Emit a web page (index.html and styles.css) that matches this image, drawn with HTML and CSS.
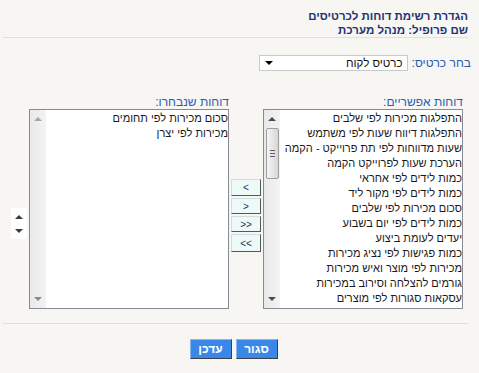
FILE: index.html
```html
<!DOCTYPE html>
<html lang="he" dir="rtl">

<head>
    <meta charset="UTF-8">
    <meta name="viewport" content="width=device-width, initial-scale=1.0">
    <title>הגדרת רשימת דוחות</title>
    <link rel="stylesheet" href="styles.css">
</head>

<body>
    <div class="page">
        <!-- כותרת -->
        <div class="head">
            <div>הגדרת רשימת דוחות לכרטיסים</div>
            <div>שם פרופיל: מנהל מערכת</div>
        </div>

        <!-- בחירת כרטיס -->
        <div class="pick">
            <span class="lbl">בחר כרטיס:</span>
            <div class="combo">
                <span>כרטיס לקוח</span>
                <span class="combo-arrow"></span>
            </div>
        </div>

        <!-- רשימות -->
        <div class="lists">
            <div class="col">
                <div class="lbl">דוחות אפשריים:</div>
                <div class="listbox">
                    <div class="items">
                        <div>התפלגות מכירות לפי שלבים</div>
                        <div>התפלגות דיווח שעות לפי משתמש</div>
                        <div>שעות מדווחות לפי תת פרוייקט - הקמה</div>
                        <div>הערכת שעות לפרוייקט הקמה</div>
                        <div>כמות לידים לפי אחראי</div>
                        <div>כמות לידים לפי מקור ליד</div>
                        <div>סכום מכירות לפי שלבים</div>
                        <div>כמות לידים לפי יום בשבוע</div>
                        <div>יעדים לעומת ביצוע</div>
                        <div>כמות פגישות לפי נציג מכירות</div>
                        <div>מכירות לפי מוצר ואיש מכירות</div>
                        <div>גורמים להצלחה וסירוב במכירות</div>
                        <div>עסקאות סגורות לפי מוצרים</div>
                    </div>
                    <div class="sbar">
                        <span class="up"></span>
                        <div class="thumb"><span></span><span></span><span></span></div>
                        <span class="down"></span>
                    </div>
                </div>
            </div>

            <div class="moves">
                <button class="mv">&gt;</button>
                <button class="mv">&lt;</button>
                <button class="mv">&lt;&lt;</button>
                <button class="mv">&gt;&gt;</button>
            </div>

            <div class="col">
                <div class="lbl">דוחות שנבחרו:</div>
                <div class="listbox">
                    <div class="items">
                        <div>סכום מכירות לפי תחומים</div>
                        <div>מכירות לפי יצרן</div>
                    </div>
                    <div class="sbar off">
                        <span class="up"></span>
                        <span class="down"></span>
                    </div>
                </div>
            </div>

            <div class="order">
                <span class="up"></span>
                <span class="down"></span>
            </div>
        </div>

        <!-- כפתורים -->
        <div class="actions">
            <button class="btn">סגור</button>
            <button class="btn">עדכן</button>
        </div>
    </div>
</body>

</html>
```

FILE: styles.css
```css
body {
    margin: 0;
    background-color: #f7f6f2;
    font-family: "Liberation Sans", "DejaVu Sans", sans-serif;
    font-size: 11px;
    color: #1a1a1a;
}

.page {
    padding: 0 11px 0 3px;
}

.head {
    padding-top: 9px;
    font-size: 11.5px;
    font-weight: bold;
    line-height: 14px;
    color: #1d3473;
    border-bottom: 1px solid #e3e0d2;
}

.lbl {
    color: #2a5cb0;
    font-size: 12px;
}

.pick {
    display: flex;
    align-items: center;
    gap: 4px;
    margin-top: 17px;
    margin-right: -3px;
}

.combo {
    display: flex;
    align-items: center;
    justify-content: space-between;
    width: 138px;
    height: 14px;
    padding: 0 4px 0 5px;
    background-color: #fff;
    border: 1px solid #c9c9c9;
    font-size: 11.5px;
    color: #111;
}

.combo-arrow {
    width: 0;
    height: 0;
    border-left: 4px solid transparent;
    border-right: 4px solid transparent;
    border-top: 4px solid #000;
}

.lists {
    display: flex;
    align-items: flex-start;
    gap: 2px;
    margin-top: 25px;
    padding-right: 5px;
    padding-bottom: 14px;
    border-bottom: 1px solid #e3e0d2;
}

.col {
    width: 200px;
}

.col .lbl {
    line-height: 13px;
}

.listbox {
    display: flex;
    height: 198px;
    background-color: #fff;
    border: 1px solid #858a93;
}

.items {
    flex: 1;
    padding-top: 1px;
    line-height: 15px;
    font-size: 11px;
    white-space: nowrap;
    overflow: hidden;
}

.sbar {
    position: relative;
    width: 16px;
    background: linear-gradient(to right, #e9e9e9, #f3f3f3);
}

.sbar .up,
.order .up {
    display: block;
    width: 0;
    height: 0;
    border-left: 4px solid transparent;
    border-right: 4px solid transparent;
    border-bottom: 4px solid #4a4a4a;
}

.sbar .down,
.order .down {
    display: block;
    width: 0;
    height: 0;
    border-left: 4px solid transparent;
    border-right: 4px solid transparent;
    border-top: 4px solid #4a4a4a;
}

.sbar .up {
    position: absolute;
    top: 7px;
    left: 4px;
}

.sbar .down {
    position: absolute;
    bottom: 7px;
    left: 4px;
}

.sbar.off .up {
    border-bottom-color: #a8a8a8;
}

.sbar.off .down {
    border-top-color: #8a8a8a;
}

.thumb {
    position: absolute;
    top: 18px;
    left: 2px;
    width: 11px;
    height: 49px;
    display: flex;
    flex-direction: column;
    justify-content: center;
    align-items: center;
    gap: 2px;
    background: linear-gradient(to right, #f4f4f4, #d6d6d6);
    border: 1px solid #9e9e9e;
    border-radius: 2px;
}

.thumb span {
    display: block;
    width: 5px;
    height: 1px;
    background-color: #606060;
}

.moves {
    display: flex;
    flex-direction: column;
    gap: 2px;
    margin-top: 83px;
}

.mv {
    width: 30px;
    height: 17px;
    padding: 0;
    background-color: #eefaf7;
    border: 1px solid;
    border-color: #d2dede #4f5a5a #4f5a5a #d2dede;
    font-family: "Liberation Sans", sans-serif;
    font-size: 10px;
    color: #1d2f6a;
    cursor: pointer;
}

.mv + .mv {
    height: 16px;
}

.mv:last-child {
    height: 18px;
}

.order {
    display: flex;
    flex-direction: column;
    align-items: center;
    justify-content: space-between;
    width: 16px;
    height: 31px;
    margin-top: 112px;
    padding: 7px 0 6px;
    box-sizing: border-box;
    background-color: #fff;
}

.order .up {
    border-bottom-color: #3a3a3a;
}

.order .down {
    border-top-color: #3a3a3a;
}

.actions {
    display: flex;
    justify-content: center;
    gap: 4px;
    padding-top: 15px;
    margin-right: 4px;
}

.btn {
    width: 42px;
    height: 20px;
    padding: 0;
    background-color: #3987e9;
    border: 1px solid;
    border-color: #8cb6ee #3b3f46 #3b3f46 #8cb6ee;
    font-family: "Liberation Sans", sans-serif;
    font-size: 12px;
    font-weight: bold;
    color: #fff;
    cursor: pointer;
}
```
